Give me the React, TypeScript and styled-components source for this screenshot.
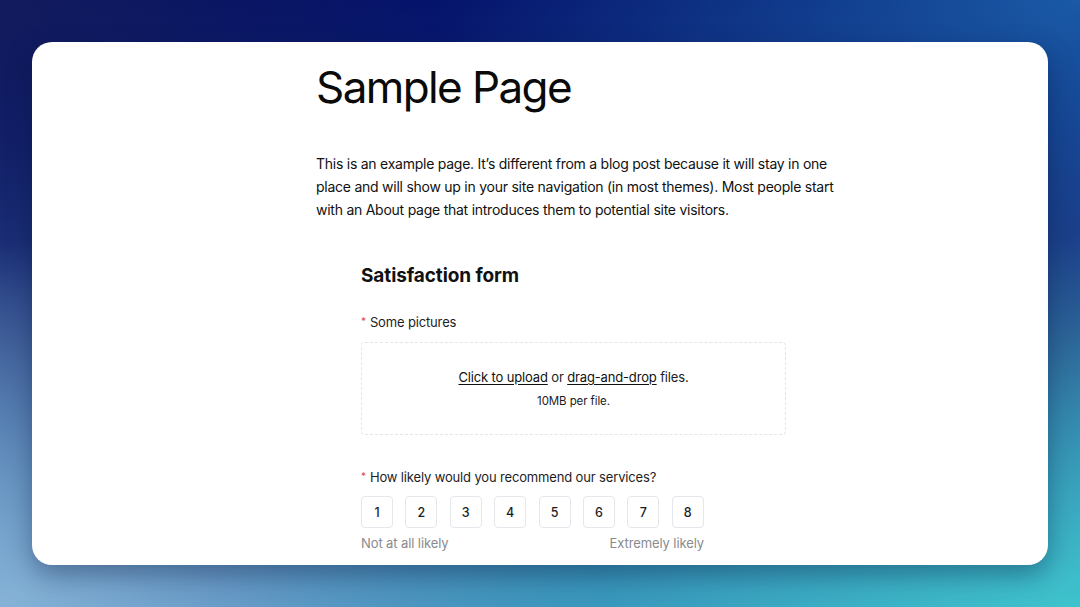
import React from "react";
import styled, { createGlobalStyle } from "styled-components";

const Global = createGlobalStyle`
  html, body { margin: 0; padding: 0; }
  body {
    width: 1080px;
    height: 607px;
    overflow: hidden;
    font-family: Inter, "Noto Sans", "Liberation Sans", sans-serif;
  }
  * { box-sizing: border-box; }
`;

const Backdrop = styled.div`
  width: 1080px;
  height: 607px;
  padding: 42px 32px 42px 32px;
  background-color: #0a1a66;
  background-image:
    radial-gradient(110% 85% at 100% 100%, #3ec3cc 0%, rgba(62, 195, 204, 0) 72%),
    radial-gradient(75% 80% at 0% 100%, #86b2d6 0%, rgba(134, 178, 214, 0) 75%),
    radial-gradient(60% 60% at 100% 0%, #1a5aa6 0%, rgba(26, 90, 166, 0) 100%),
    radial-gradient(40% 50% at 0% 0%, #121b5c 0%, rgba(18, 27, 92, 0) 100%),
    linear-gradient(180deg, #04126a 0%, #263f82 55%, #3576b0 100%);
`;

const Card = styled.main`
  height: 523px;
  background: #ffffff;
  border-radius: 20px;
  overflow: hidden;
  box-shadow: 0 10px 26px rgba(5, 20, 60, 0.38);
  padding: 16px 0 0 284px;
`;

const Article = styled.article`
  width: 530px;
  color: #111111;
`;

const Title = styled.h1`
  margin: 0;
  font-size: 44px;
  line-height: 58px;
  font-weight: 400;
  letter-spacing: -1.6px;
  color: #0a0a0a;
`;

const Lead = styled.p`
  margin: 36px 0 0 0;
  font-size: 14px;
  line-height: 23px;
  color: #111111;
  letter-spacing: -0.25px;
`;

const Form = styled.section`
  margin: 41px 0 0 45px;
  width: 425px;
`;

const FormTitle = styled.h2`
  margin: 0;
  font-size: 19px;
  line-height: 28px;
  font-weight: 700;
  color: #111111;
  letter-spacing: -0.1px;
`;

const Field = styled.div<{ $top: number }>`
  margin-top: ${(p) => p.$top}px;
`;

const Label = styled.div`
  font-size: 13px;
  line-height: 20px;
  color: #1d1d1f;
  letter-spacing: -0.15px;
  display: flex;
  align-items: center;
  gap: 4px;
`;

const Req = styled.span`
  color: #e5484d;
  font-size: 10px;
  line-height: 20px;
  position: relative;
  top: -1px;
`;

const Drop = styled.div`
  margin-top: 10px;
  height: 93px;
  border: 1px dashed #e2e5ea;
  border-radius: 4px;
  padding: 24px 0 0 0;
  display: flex;
  flex-direction: column;
  align-items: center;
  gap: 6px;
`;

const DropMain = styled.div`
  font-size: 13px;
  line-height: 20px;
  letter-spacing: -0.15px;
  color: #1d1d1f;
`;

const DropLink = styled.span`
  text-decoration: underline;
  text-underline-offset: 2px;
  color: #111;
`;

const DropSub = styled.div`
  font-size: 11.5px;
  line-height: 16px;
  letter-spacing: -0.1px;
  color: #1d1d1f;
`;

const Scale = styled.div`
  margin-top: 9px;
  width: 343px;
`;

const Options = styled.div`
  display: flex;
  gap: 12.4px;
`;

const Option = styled.button`
  width: 32px;
  height: 32px;
  padding: 0;
  border: 1px solid #e4e7ec;
  border-radius: 4px;
  background: #fff;
  font-family: inherit;
  font-size: 12.5px;
  font-weight: 500;
  color: #1d1d1f;
  display: flex;
  align-items: center;
  justify-content: center;
`;

const Ends = styled.div`
  margin-top: 5px;
  display: flex;
  justify-content: space-between;
  font-size: 13px;
  line-height: 20px;
  letter-spacing: -0.1px;
  color: #8a8a8e;
`;

export default function App() {
  return (
    <>
      <Global />
      <Backdrop>
        <Card>
          <Article>
            <Title>Sample Page</Title>
            <Lead>
              This is an example page. It’s different from a blog post because it will stay in one
              place and will show up in your site navigation (in most themes). Most people start
              with an About page that introduces them to potential site visitors.
            </Lead>
            <Form>
              <FormTitle>Satisfaction form</FormTitle>
              <Field $top={22}>
                <Label>
                  <Req>*</Req>Some pictures
                </Label>
                <Drop>
                  <DropMain>
                    <DropLink>Click to upload</DropLink> or <DropLink>drag-and-drop</DropLink> files.
                  </DropMain>
                  <DropSub>10MB per file.</DropSub>
                </Drop>
              </Field>
              <Field $top={32}>
                <Label>
                  <Req>*</Req>How likely would you recommend our services?
                </Label>
                <Scale>
                  <Options>
                    {[1, 2, 3, 4, 5, 6, 7, 8].map((n) => (
                      <Option key={n}>{n}</Option>
                    ))}
                  </Options>
                  <Ends>
                    <span>Not at all likely</span>
                    <span>Extremely likely</span>
                  </Ends>
                </Scale>
              </Field>
            </Form>
          </Article>
        </Card>
      </Backdrop>
    </>
  );
}
